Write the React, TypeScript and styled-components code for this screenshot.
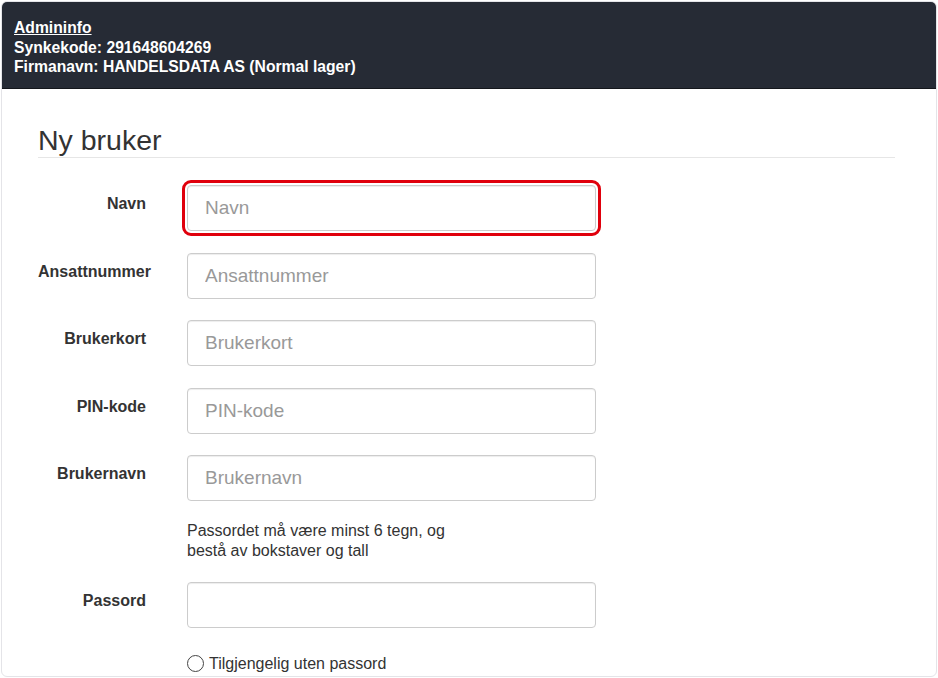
import React from 'react'
import styled, {createGlobalStyle} from 'styled-components'

const GlobalStyle = createGlobalStyle`
    * {
        box-sizing: border-box;
    }
    body {
        margin: 0;
        background: #ffffff;
        font-family: "Liberation Sans", Arial, sans-serif;
        color: #333333;
    }
`

type Field = {
    label: string
    placeholder: string
    focused?: boolean
}

const fields: Field[] = [
    {label: 'Navn', placeholder: 'Navn', focused: true},
    {label: 'Ansattnummer', placeholder: 'Ansattnummer'},
    {label: 'Brukerkort', placeholder: 'Brukerkort'},
    {label: 'PIN-kode', placeholder: 'PIN-kode'},
    {label: 'Brukernavn', placeholder: 'Brukernavn'},
]

export default function App() {
    return (
        <>
            <GlobalStyle/>
            <Panel>
                <Header>
                    <HeaderLink href="#">Admininfo</HeaderLink>
                    <HeaderLine>Synkekode: 291648604269</HeaderLine>
                    <HeaderLine>Firmanavn: HANDELSDATA AS (Normal lager)</HeaderLine>
                </Header>
                <Content>
                    <Title>Ny bruker</Title>
                    <Form>
                        {fields.map(f => (
                            <Row key={f.label}>
                                <Label>{f.label}</Label>
                                <Input placeholder={f.placeholder} $focused={f.focused}/>
                            </Row>
                        ))}
                        <Row>
                            <span/>
                            <Help>Passordet må være minst 6 tegn, og bestå av bokstaver og tall</Help>
                        </Row>
                        <Row>
                            <Label>Passord</Label>
                            <Input type="password"/>
                        </Row>
                        <Row>
                            <span/>
                            <RadioLabel>
                                <Radio type="radio" name="pw"/>
                                Tilgjengelig uten passord
                            </RadioLabel>
                        </Row>
                    </Form>
                </Content>
            </Panel>
        </>
    )
}

const Panel = styled.div`
    margin: 1px;
    height: 676px;
    border: 1px solid #e4e4e8;
    border-radius: 6px;
    overflow: hidden;
    background: #ffffff;
`

const Header = styled.header`
    display: flex;
    flex-direction: column;
    background: #262b35;
    border-bottom: 1px solid #14171c;
    padding: 16px 12px 10px;
    height: 87px;
    color: #ffffff;
    font-weight: 700;
    font-size: 15.7px;
    line-height: 19.5px;
`

const HeaderLink = styled.a`
    color: #ffffff;
    text-decoration: underline;
    align-self: flex-start;
`

const HeaderLine = styled.span``

const Content = styled.div`
    padding: 0 41px 0 36px;
`

const Title = styled.h1`
    margin: 36px 0 0;
    padding-bottom: 1px;
    border-bottom: 1px solid #e6e6e6;
    font-size: 28.5px;
    font-weight: 400;
    line-height: 31px;
    color: #333333;
`

const Form = styled.form`
    display: flex;
    flex-direction: column;
    gap: 21.5px;
    margin-top: 27px;
`

const Row = styled.div`
    display: grid;
    grid-template-columns: 108px 409px;
    column-gap: 41px;
    align-items: start;
`

const Label = styled.label`
    padding-top: 10px;
    text-align: right;
    white-space: nowrap;
    font-size: 16px;
    font-weight: 700;
    line-height: 18px;
    color: #333333;
`

const Input = styled.input<{$focused?: boolean}>`
    width: 100%;
    height: 46px;
    padding: 0 17px;
    border: 1px solid #cccccc;
    border-radius: 4px;
    box-shadow: inset 0 1px 1px rgba(0, 0, 0, 0.075);
    font-family: "Liberation Sans", Arial, sans-serif;
    font-size: 19px;
    color: #555555;
    outline: ${p => p.$focused ? '3px solid #e0000c' : 'none'};
    outline-offset: 2px;

    &::placeholder {
        color: #999999;
    }
`

const Help = styled.p`
    margin: -1.5px 0 0;
    max-width: 290px;
    font-size: 16px;
    line-height: 19.5px;
    color: #333333;
`

const RadioLabel = styled.label`
    display: flex;
    align-items: center;
    gap: 5px;
    margin-top: 5px;
    font-size: 16px;
    line-height: 19px;
    color: #333333;
`

const Radio = styled.input`
    appearance: none;
    margin: 0;
    width: 17px;
    height: 17px;
    border: 1.5px solid #444444;
    border-radius: 50%;
    background: #ffffff;
`
